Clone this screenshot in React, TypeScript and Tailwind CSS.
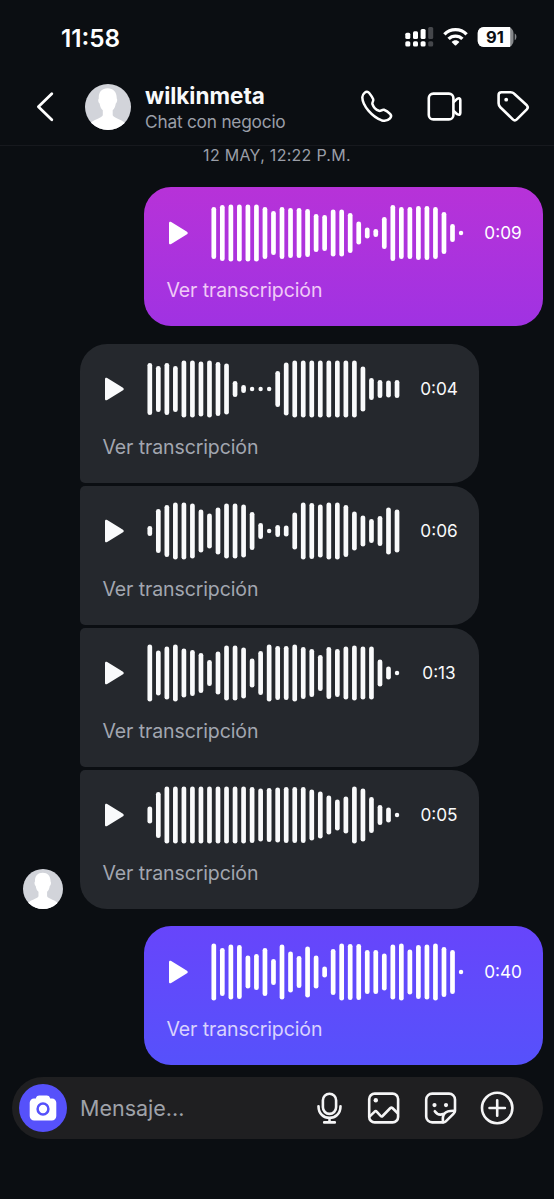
import React from "react";
import clsx from "clsx";

type Tone = "magenta" | "violet" | "gray";

interface VoiceMessage {
  duration: string;
  bars: number[];
}

const first: VoiceMessage = {
  duration: "0:09",
  bars: [52, 56, 57, 57, 57, 57, 52, 44, 52, 50, 50, 48, 38, 36, 47, 47, 40, 23, 11, 8, 32, 56, 52, 52, 54, 54, 52, 42, 18, 4.5],
};

const received: VoiceMessage[] = [
  {
    duration: "0:04",
    bars: [52, 46, 52, 46, 57, 57, 55, 57, 54, 51, 16, 8, 4.5, 4.5, 4.5, 36, 53, 57, 57, 57, 57, 57, 57, 57, 57, 45, 22, 18, 17, 18],
  },
  {
    duration: "0:06",
    bars: [10, 44, 52, 57, 57, 55, 43, 35, 47, 55, 55, 53, 38, 16, 4.5, 12, 11, 37, 57, 56, 53, 57, 57, 52, 39, 31, 24, 30, 47, 43],
  },
  {
    duration: "0:13",
    bars: [57, 45, 53, 57, 49, 46, 40, 26, 43, 55, 55, 51, 29, 44, 57, 54, 54, 57, 52, 48, 36, 52, 48, 53, 55, 53, 53, 27, 13, 4.5],
  },
  {
    duration: "0:05",
    bars: [17, 46, 57, 57, 57, 57, 57, 57, 57, 57, 57, 57, 56, 53, 54, 55, 56, 56, 56, 51, 47, 39, 31, 37, 57, 53, 36, 20, 15, 4.5],
  },
];

const last: VoiceMessage = {
  duration: "0:40",
  bars: [57, 48, 55, 54, 33, 36, 48, 26, 55, 41, 32, 51, 33, 11, 46, 57, 56, 56, 44, 44, 37, 55, 57, 45, 54, 55, 57, 50, 44, 4.5],
};

function Waveform({ bars }: { bars: number[] }) {
  return (
    <svg width="254" height="58" viewBox="0 0 254 58" className="shrink-0" fill="currentColor">
      {bars.map((h, i) => {
        const w = h < 5 ? 4.4 : 4.7;
        return <rect key={i} x={3.8 + i * 8.525 - w / 2} y={29 - h / 2} width={w} height={h} rx={w / 2} />;
      })}
    </svg>
  );
}

function VoiceBubble({ message, tone, className }: { message: VoiceMessage; tone: Tone; className?: string }) {
  return (
    <div
      className={clsx(
        "flex h-[139px] w-[399px] shrink-0 flex-col",
        tone === "magenta" && "rounded-[27px] bg-linear-to-b from-[#b732d8] to-[#a032e2] text-white",
        tone === "violet" && "rounded-[27px] bg-linear-to-b from-[#6745fb] to-[#5651fb] text-white",
        tone === "gray" && "bg-[#25282d] text-[#f9fafb]",
        className,
      )}
    >
      <div className="flex h-[91px] items-center pl-[25px]">
        <svg width="20" height="24" viewBox="0 0 20 24" className="mr-[21px] shrink-0" fill="currentColor">
          <path d="M0 2.2C0 0.7 1 0.3 2.2 1L17.6 10.4C19.1 11.4 19.1 12.6 17.6 13.6L2.2 23C1 23.7 0 23.3 0 21.8Z" />
        </svg>
        <Waveform bars={message.bars} />
        <span className="flex-1 text-center text-[17.2px] leading-6">{message.duration}</span>
      </div>
      <button
        className={clsx(
          "ml-[23px] self-start text-[19.5px] leading-6 tracking-[-0.11px] whitespace-nowrap",
          tone === "gray" ? "text-[#a2a6b0]" : tone === "magenta" ? "text-[#f0c9f7]" : "text-[#d9d2fe]",
        )}
      >
        Ver transcripción
      </button>
    </div>
  );
}

function Avatar({ size }: { size: number }) {
  return (
    <svg width={size} height={size} viewBox="0 0 46 46" className="shrink-0">
      <defs>
        <clipPath id={`avatar-${size}`}>
          <circle cx="23" cy="23" r="23" />
        </clipPath>
      </defs>
      <g clipPath={`url(#avatar-${size})`}>
        <rect width="46" height="46" fill="#d2d4da" />
        <path
          fill="#fff"
          d="M22.6 4.2C28.6 4.2 32 8.4 31.7 14.5C32.7 15.4 32 18.7 30.8 19.5C30.4 22.4 29.3 24.7 27.7 26.3V31.3C28.7 34.5 38.5 35.3 41.5 41V48H4V41C7 35.3 16.9 34.5 17.8 31.3V26.3C16.1 24.7 15 22.4 14.6 19.5C13.3 18.7 12.7 15.4 13.8 14.5C13.3 8.4 16.6 4.2 22.6 4.2Z"
        />
      </g>
    </svg>
  );
}

function StatusIcons() {
  return (
    <svg width="112" height="22" viewBox="405 26 112 22" className="shrink-0">
      <g fill="#fff">
        <rect x="405.3" y="32.7" width="5" height="6.3" rx="1.5" />
        <rect x="413" y="31.3" width="5" height="7.7" rx="1.5" />
        <rect x="420.6" y="29" width="5" height="10" rx="1.5" />
        <rect x="405.3" y="41.2" width="5" height="5.3" rx="1.6" />
        <rect x="413" y="41.2" width="5" height="5.3" rx="1.6" />
        <rect x="420.6" y="41.2" width="5" height="5.3" rx="1.6" />
      </g>
      <g fill="#45474b">
        <rect x="428.2" y="27" width="5" height="12" rx="1.5" />
        <rect x="428.2" y="41.2" width="5" height="5.3" rx="1.6" />
      </g>
      <g fill="none" stroke="#fff" strokeWidth="3.3">
        <path d="M444.4 34.4C450.4 28.1 460.6 28.1 466.6 34.4" />
        <path d="M448.6 38.9C452.3 35.1 458.7 35.1 462.4 38.9" />
      </g>
      <path d="M451.6 42C453.8 39.7 457.2 39.7 459.4 42L456.2 45.2Q455.5 45.8 454.8 45.2Z" fill="#fff" />
      <rect x="477.7" y="27" width="35.8" height="20" rx="6" fill="#85878a" />
      <path d="M483.7 27H510.2V47H483.7A6 6 0 0 1 477.7 41V33A6 6 0 0 1 483.7 27Z" fill="#fff" />
      <path d="M514.7 33.5C517 34.5 517 39 514.7 40.3Z" fill="#85878a" />
      <text x="494.9" y="42.9" textAnchor="middle" fontSize="16.5" fontWeight="700" fill="#0b0e12">
        91
      </text>
    </svg>
  );
}

function ChatHeader() {
  return (
    <header className="flex h-[72px] shrink-0 items-center border-b border-[#17191e] pb-[5px]">
      <svg width="18" height="32" viewBox="36 91 18 32" className="ml-9 shrink-0" fill="none" stroke="#fff" strokeWidth="2.8" strokeLinecap="round" strokeLinejoin="round">
        <path d="M51.8 93.8L38.4 106.8L51.8 119.8" />
      </svg>
      <div className="ml-[31px] flex">
        <Avatar size={46} />
      </div>
      <div className="ml-[14px] flex w-[200px] flex-col pt-[1px] whitespace-nowrap">
        <span className="text-[22.5px] leading-[27px] font-bold text-[#f8f9fb]">wilkinmeta</span>
        <span className="mt-[1px] text-[17.3px] leading-6 tracking-[-0.22px] text-[#9a9ea8]">Chat con negocio</span>
      </div>
      <svg width="34" height="34" viewBox="360 90 34 34" className="ml-[15px] shrink-0" fill="none" stroke="#fff" strokeWidth="2.5" strokeLinejoin="round">
        <path d="M364.8 92.6C366.2 91.4 367.9 91.5 369 92.8C370.7 94.9 372.2 97 373.2 99.3C373.9 101 371.8 102.3 372.4 104C373.4 106.9 376.3 110 379 110.8C381 111.4 381.9 109.2 384 109.8C386.3 110.6 388.5 112.3 390.3 114.1C391.5 115.4 391.2 117 390 118.3C387.8 120.6 384.5 121.3 381.3 120.2C372.7 117 362.5 106.3 362.3 97.3C362.3 95.3 363.4 93.8 364.8 92.6Z" />
      </svg>
      <svg width="36" height="32" viewBox="427 91 36 32" className="ml-[33px] shrink-0" fill="none" stroke="#fff" strokeWidth="2.6" strokeLinejoin="round">
        <rect x="428.8" y="93.6" width="24.6" height="25.8" rx="4.5" />
        <path d="M453.4 102.4L457.2 98.9Q460.3 97.3 460.3 100V113Q460.3 115.8 457.2 114.2L453.4 110.7" />
      </svg>
      <svg width="34" height="34" viewBox="496 90 34 34" className="ml-[33px] shrink-0" fill="none" stroke="#fff" strokeWidth="2.6" strokeLinejoin="round">
        <path d="M501.5 92.2H510.5Q512.7 92.2 514.2 93.7L526.8 105.3Q528.7 107.3 526.8 109.3L516.8 119.3Q514.8 121.3 512.8 119.3L500.3 107.2Q498.6 105.5 498.6 103.3V95.1Q498.6 92.2 501.5 92.2Z" />
        <circle cx="506.2" cy="99.7" r="1.9" fill="#fff" stroke="none" />
      </svg>
    </header>
  );
}

function Composer() {
  return (
    <footer className="mt-[11.7px] ml-[11.5px] flex h-[62px] w-[531px] shrink-0 items-center rounded-full bg-[#1f1f21] pl-[7px]">
      <button className="flex size-[48.5px] items-center justify-center rounded-full bg-[#5651fb]">
        <svg width="28" height="26" viewBox="0 0 28 26">
          <path d="M5 3.4H6.8C7.5 1.2 8.7 0.5 10.2 0.5H17.8C19.3 0.5 20.5 1.2 21.2 3.4H23A4.3 4.3 0 0 1 27.3 7.7V21A4.5 4.5 0 0 1 22.8 25.5H5.2A4.5 4.5 0 0 1 0.7 21V7.7A4.3 4.3 0 0 1 5 3.4Z" fill="#fff" />
          <circle cx="14" cy="14" r="5.4" fill="#fff" stroke="#5651fb" strokeWidth="2.5" />
        </svg>
      </button>
      <span className="ml-[13px] w-[236px] text-[21.5px] leading-7 text-[#9fa2a9]">Mensaje...</span>
      <svg width="28" height="34" viewBox="316 1091 28 34" fill="none" stroke="#f5f5f6" strokeWidth="2.6" strokeLinecap="round">
        <rect x="322.9" y="1093.7" width="13.2" height="20.2" rx="6.6" />
        <path d="M318.5 1106.2C318.5 1121.8 340.5 1121.8 340.5 1106.2M329.5 1118.5V1122.2M324.2 1122.4H334.8" />
      </svg>
      <svg width="34" height="34" viewBox="366 1091 34 34" className="ml-[22px]" fill="none" stroke="#f5f5f6" strokeWidth="2.6" strokeLinejoin="round">
        <rect x="369.2" y="1093.6" width="28.9" height="28.8" rx="5.5" />
        <circle cx="375.8" cy="1100.2" r="2.2" fill="#f5f5f6" stroke="none" />
        <path d="M369.5 1116.6L374.7 1111.6Q375.8 1110.7 376.9 1111.8L380.7 1116Q381.6 1117 382.6 1116L390.4 1108Q391.4 1107.1 392.4 1108L398 1113.5" />
      </svg>
      <svg width="34" height="34" viewBox="423 1091 34 34" className="ml-[23px]" fill="none" stroke="#f5f5f6" strokeWidth="2.6" strokeLinejoin="round" strokeLinecap="round">
        <path d="M443.2 1122.4H432.2A6 6 0 0 1 426.2 1116.4V1099.6A6 6 0 0 1 432.2 1093.6H449A6 6 0 0 1 455 1099.6V1111C455 1112.2 454.3 1113 453.4 1113.9L445.8 1121.4Q444.8 1122.4 443.2 1122.4Z" />
        <path d="M443 1122.2C442 1114.5 444.5 1110.3 454.6 1110.7" />
        <path d="M434.8 1111.2C437 1114.4 440.2 1115.2 443.3 1114" />
        <circle cx="434.5" cy="1105.1" r="2.1" fill="#f5f5f6" stroke="none" />
        <circle cx="446" cy="1105.1" r="2.1" fill="#f5f5f6" stroke="none" />
      </svg>
      <svg width="34" height="34" viewBox="480 1091 34 34" className="ml-[23px]" fill="none" stroke="#f5f5f6" strokeWidth="2.6" strokeLinecap="round">
        <circle cx="497.2" cy="1108" r="15.2" />
        <path d="M489.5 1108H504.9M497.2 1100.3V1115.7" />
      </svg>
    </footer>
  );
}

const receivedShapes = [
  "rounded-[27px] rounded-bl-[5px]",
  "rounded-l-[5px] rounded-r-[27px]",
  "rounded-l-[5px] rounded-r-[27px]",
  "rounded-[27px] rounded-tl-[5px]",
];

export default function App() {
  return (
    <div className="flex h-[1199px] w-[554px] flex-col overflow-hidden bg-[#0b0e12] font-['Inter',sans-serif]">
      <div className="flex h-[74px] shrink-0 items-center pl-[61px]">
        <span className="w-[344px] pt-[2px] text-[24.3px] leading-7 font-semibold text-white">11:58</span>
        <StatusIcons />
      </div>
      <ChatHeader />
      <main className="flex shrink-0 flex-col">
        <div className="h-[41.2px] text-center text-[16px] leading-[19px] tracking-[0.28px] text-[#9a9ea8]">12 MAY, 12:22 P.M.</div>
        <VoiceBubble message={first} tone="magenta" className="mr-[11.5px] self-end" />
        <div className="mt-[17.8px] flex items-end">
          <div className="ml-[22.5px] flex w-[57px] shrink-0">
            <Avatar size={40} />
          </div>
          <div className="flex flex-col gap-[3px]">
            {received.map((m, i) => (
              <VoiceBubble key={m.duration} message={m} tone="gray" className={receivedShapes[i]} />
            ))}
          </div>
        </div>
        <VoiceBubble message={last} tone="violet" className="mt-[17.2px] mr-[11.5px] self-end" />
      </main>
      <Composer />
    </div>
  );
}
